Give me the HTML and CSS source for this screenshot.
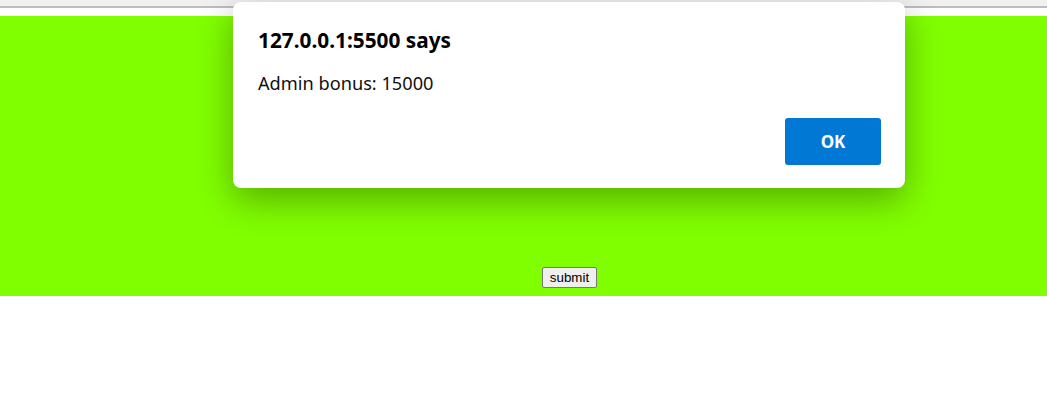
FILE: index.html
```html
<!DOCTYPE html>
<html>
<head>
<meta charset="utf-8">
<link rel="stylesheet" href="styles.css">
</head>
<body>
<div class="chrome"></div>
<div class="gap"></div>
<div class="stage">
  <button class="submit">submit</button>
</div>
<div class="dialog">
  <div class="title">127.0.0.1:5500 says</div>
  <div class="msg">Admin bonus: 15000</div>
  <div class="actions"><button class="ok">OK</button></div>
</div>
</body>
</html>
```
FILE: styles.css
```css
html, body { margin: 0; padding: 0; background: #fff; }
body { width: 1047px; height: 406px; overflow: hidden; position: relative; }
.chrome { height: 6px; background: #f1f1f1; border-bottom: 2px solid #bdbdbd; }
.gap { height: 8px; background: #fff; }
.stage {
  height: 280px; background: #80ff00;
  display: flex; justify-content: center; align-items: flex-end;
  padding-left: 92px; box-sizing: border-box; padding-bottom: 8px;
}
.submit {
  font-family: "Liberation Sans", Arial, sans-serif; font-size: 13.33px;
  background: #efefef; border: 1px solid #767676; border-radius: 2px;
  padding: 1px 7px; height: 21px; color: #000;
}
.dialog {
  position: absolute; left: 233px; top: 2px; width: 672px; height: 186px;
  box-sizing: border-box; background: #fff; border-radius: 8px;
  box-shadow: 0 12px 36px rgba(0,0,0,0.32);
  padding: 24px 24px 0 25px;
  font-family: "Noto Sans", "Open Sans", sans-serif; color: #000;
}
.title { font-size: 20.8px; font-weight: 700; line-height: 28px; }
.msg { font-size: 18.2px; line-height: 26px; margin-top: 16px; color: #111; }
.actions { display: flex; justify-content: flex-end; margin-top: 22px; }
.ok {
  width: 96px; height: 47px; background: #0078d4; color: #fff; border: none;
  border-radius: 3px; font-family: "Noto Sans", "Open Sans", sans-serif;
  font-size: 17px; font-weight: 700;
}
```
